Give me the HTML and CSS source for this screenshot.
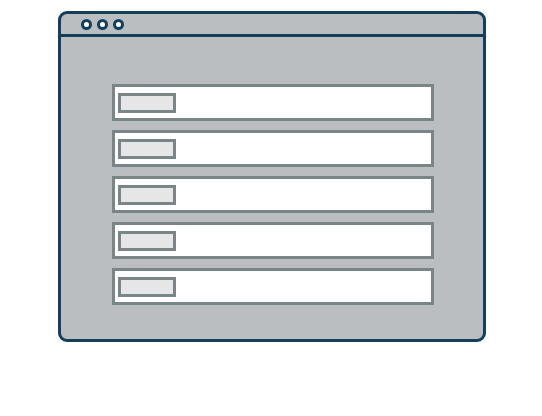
FILE: index.html
```html
<!DOCTYPE html>
<html>
<head>
    <meta charset="UTF-8">
    <link rel="stylesheet" href="styles.css">
</head>
<body>
    <div class="window">
        <div class="titlebar">
            <span class="dot"></span>
            <span class="dot"></span>
            <span class="dot"></span>
        </div>
        <div class="list">
            <div class="row"><div class="tag"></div></div>
            <div class="row"><div class="tag"></div></div>
            <div class="row"><div class="tag"></div></div>
            <div class="row"><div class="tag"></div></div>
            <div class="row"><div class="tag"></div></div>
        </div>
    </div>
</body>
</html>
```

FILE: styles.css
```css
body {
    margin: 0;
    padding: 11px 0 0 58px;
    background: #ffffff;
}
.window {
    box-sizing: border-box;
    width: 428px;
    height: 331px;
    border: 3px solid #143e5a;
    border-radius: 9px;
    background-color: #bbbec0;
    overflow: hidden;
}
.titlebar {
    height: 20px;
    border-bottom: 3px solid #143e5a;
    display: flex;
    align-items: center;
    gap: 5px;
    padding-left: 20px;
}
.dot {
    box-sizing: border-box;
    width: 11px;
    height: 11px;
    border: 3px solid #143e5a;
    border-radius: 50%;
    background: #ffffff;
}
.list {
    width: 322px;
    margin-left: 51px;
    padding-top: 47px;
    display: flex;
    flex-direction: column;
    gap: 9px;
}
.row {
    box-sizing: border-box;
    height: 37px;
    border: 3px solid #7a8588;
    background: #ffffff;
    padding: 6px 3px 5px 3px;
}
.tag {
    box-sizing: border-box;
    width: 58px;
    height: 20px;
    border: 3px solid #7a8588;
    background: #e6e6e6;
}
```
